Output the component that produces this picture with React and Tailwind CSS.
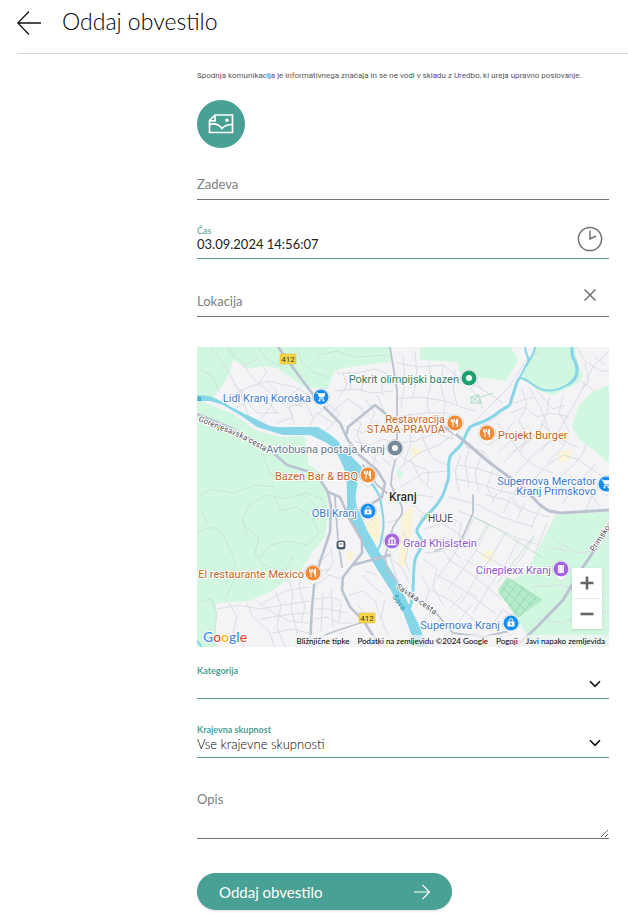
import { useState } from "react";

const GREENS = [
  "M0 0H193L195 15L166 18L143 22L136 26L131 42L116 41L104 38L93 30L80 21L66 19L50 22L36 12L33 24L26 38L18 48L14 54L0 50Z",
  "M0 53L35 66L60 84L85 90L108 89L111 116L121 125L130 145L131 163L128 190L116 204L103 224L76 243L53 254L19 256V300H0Z",
  "M223 0H314L321 13L313 27L308 34L276 29L263 26L260 15L223 13Z",
  "M338 0H378L380 13L386 29L380 37L356 48L340 43L326 31L328 18Z",
  "M412 38L393 46L381 60L375 80L382 92L396 103L412 116Z",
  "M359 168L412 165V300H336L326 281L303 246L306 236L320 231L331 221L346 193Z",
  "M200 120L207 128L201 132Z",
];

const YELLOWS = [
  "M168 168L182 166L184 188L178 200L168 184Z",
  "M205 168L216 158L214 190L208 220L201 218L204 190Z",
  "M215 98L224 104L218 112L214 106Z",
  "M360 106L372 102L376 110L364 116Z",
  "M288 204L297 203L294 216L284 210Z",
  "M150 204L158 206L154 216L149 212Z",
];

// thin streets
const STREETS = [
  // north-west quarter
  "M14 0L30 22L44 48L52 70",
  "M32 0L48 20L58 34L74 46L92 62L98 78",
  "M28 52L52 40L70 34L98 40L118 52",
  "M38 62L58 50L82 54L106 60",
  "M46 20L60 12L70 24L62 36",
  "M64 72L76 56L92 50L104 40",
  "M80 76L96 70L92 60L108 56L116 70",
  "M48 52L60 66L84 66",
  "M36 38L46 44L42 56",
  "M70 34L80 44L74 58L80 66",
  "M112 80L120 66L136 76",
  "M122 66L132 58L142 66L136 78L128 84",
  "M142 50L150 38L146 26M134 66L150 52L166 62",
  "M140 26L160 26L178 22L194 28",
  "M138 44L158 42L176 46L196 44",
  "M156 82L166 86L178 74L190 84L200 84",
  "M158 94L172 98L186 92L198 96",
  "M154 70L164 76L160 88L168 104L182 116",
  "M160 58L170 70M168 52L178 66L172 78M180 48L188 66",
  "M186 48L184 30M164 44L168 26M154 42L152 24",
  "M180 104L176 118M186 112L194 118",
  // centre
  "M200 16L222 20L246 18L266 34L282 40L306 56",
  "M200 52L222 50L248 54L264 60L278 64",
  "M202 70L226 66L250 66L262 72",
  "M206 8L208 34L204 60M218 4L220 30L216 50M232 14L234 36L230 54L232 66",
  "M246 18L244 40L248 54L246 78M258 22L256 40L260 58",
  "M270 36L282 52L286 62M278 30L284 42",
  "M200 96L218 94L238 86L256 92",
  "M204 82L224 84L246 82M212 66L214 96L206 118",
  "M224 66L226 92L236 112L250 118",
  "M202 122L222 106L242 98L258 86",
  "M204 140L226 126L250 124M214 112L222 130L236 144",
  "M202 108L218 118L232 124L230 140",
  "M206 152L222 148L236 150",
  "M214 156L226 166L222 178",
  "M190 176L202 172L206 162",
  // east
  "M273 80L296 56L312 40L330 12L344 4",
  "M283 80L296 72L316 56L336 50",
  "M314 66L328 60L340 70L354 66L372 70",
  "M324 40L330 58L322 74L330 88L324 104",
  "M332 40L344 62L352 84L366 98M340 44L356 62L368 58",
  "M352 50L350 66L342 84L330 96L316 104",
  "M366 48L362 66L372 84L366 100L350 116",
  "M380 0L388 14L404 24L412 24M412 4L396 20L378 56L362 84L344 104",
  "M384 34L398 44M388 16L392 34L384 44M398 10L408 18",
  "M300 76L314 92L326 110L340 120L356 126",
  "M292 98L306 88L318 74M300 106L316 92L332 78",
  "M306 116L322 100L340 86M318 128L334 110L350 96L372 88",
  "M332 138L350 118L366 108L380 112L412 134",
  "M350 146L366 128L384 110L390 96",
  "M366 156L380 136L398 118M388 164L396 146L412 128",
  "M344 76L358 90L380 100M372 128L392 146L404 160",
  "M268 100L286 104L300 122M264 108L258 124L262 146",
  "M274 96L268 116L272 140M286 104L278 126L282 146",
  "M262 118L282 122L306 130M258 132L280 136L304 144L330 150",
  "M296 122L290 140L296 152M308 130L304 146M320 138L316 152L324 164",
  // south-east grid
  "M252 150L282 158L304 170L336 180M262 164L290 176L318 190L342 198",
  "M288 148L306 152L332 164L352 170M294 158L300 146M306 166L314 150M320 172L328 156M334 180L344 160",
  "M248 168L264 176L262 190L280 204L304 218L322 226",
  "M228 182L244 176L258 184L268 194M232 196L248 190L262 202",
  "M276 172L268 190L254 212L240 232M292 178L280 202L266 222L250 244",
  "M308 186L296 208L280 230L264 256M322 192L308 218L292 240L276 266",
  "M338 188L324 212L308 230M350 176L338 206",
  "M250 212L270 224L290 240L304 252M240 228L262 240L284 256L300 268",
  "M232 242L254 254L272 268L286 284M226 212L240 222L236 240L246 258",
  "M224 228L232 242L228 258L240 268M228 206L246 204L256 216",
  "M256 204L264 212M268 212L276 218M284 224L294 230M270 244L280 250",
  "M252 262L266 248M262 274L274 258M292 284L306 262L318 274",
  "M232 282L244 272L256 288L250 300M276 286L292 292L300 300",
  "M336 240L364 238L392 250L412 244M340 272L366 276L396 262L412 266",
  "M356 192L380 206L396 204M352 200L370 204",
  // centre-south
  "M206 184L212 196L208 214L213 226M192 206L198 226L204 240",
  "M194 212L206 222L212 236",
  "M134 200L136 216L128 228",
  "M152 248L166 244L178 254L184 272M160 258L172 270L180 266",
  "M166 228L176 240L186 246M168 224L180 228M188 252L184 272L192 290L208 300",
  // south-west
  "M20 262L42 258L62 262L86 258L112 254",
  "M50 256L56 270L72 284L78 300M60 254L70 262L92 274L112 276",
  "M78 244L84 258L80 280L88 300M92 234L96 246L94 262L100 284L98 300",
  "M104 226L102 240L108 260L104 276M66 256L88 244L112 240",
  "M64 272L86 268L112 266M76 286L94 282L112 286",
  "M32 256L40 270L36 286L48 300M118 252L134 250L144 254",
  "M118 262L132 262L150 266M118 272L130 270L142 276L156 276",
  "M126 246L124 284M134 242L136 280M144 256L142 274",
  "M120 238L132 228L144 232M122 224L134 222M120 214L126 212L134 204",
];

// footpaths in the woods
const TRAILS = [
  "M0 150L14 142L36 146L58 138L78 140",
  "M0 186L14 180L24 184L30 196L38 214L36 236L28 252",
  "M50 188L46 172L52 158L70 148L88 152L108 146L126 152",
  "M46 178L62 190L58 206L66 218L88 224L96 210",
  "M62 212L74 198L92 194L110 198L122 186L116 172L118 158L104 146",
  "M76 148L84 164L100 160L112 168",
  "M30 0L38 12M0 20L16 30L22 44M60 0L72 14L86 20M100 0L104 14L118 26L132 30",
  "M0 256L14 252L20 266L16 300M66 106L72 126L90 134L112 134",
  "M4 164L10 176M120 8L140 4L158 10L190 8",
];

const MAJOR = [
  "M81 0L100 26L120 53L143 76L151 93L160 106L180 123L188 136L185 150L170 160",
  "M150 86L151 80L178 58L190 68L200 72",
  "M0 67L32 80L73 103L90 118L110 124L124 134L131 145L134 160L133 185L126 206L118 230L115 260L113 300",
  "M131 145L143 150L153 173L165 193L165 206L146 230L145 243L153 260L166 273L182 298",
  "M156 218L193 208",
];

const MEDIUM = [
  "M193 0L200 43L200 106L195 126L194 138L205 160L205 167L196 180L188 210L190 223L206 243L240 267L256 286L286 290L312 284",
  "M166 275L133 286L114 294",
  "M138 150L141 193L145 220",
  "M276 148L276 166L264 194L238 204",
  "M166 118L180 138L190 146",
];

const POI_COLORS = {
  shop: { pin: "#1a8df0", text: "#3c78d0" },
  food: { pin: "#f08a35", text: "#c8651c" },
  park: { pin: "#1fa071", text: "#29805a" },
  transit: { pin: "#78899a", text: "#66788a" },
  culture: { pin: "#a466e0", text: "#8e56cc" },
};

const POIS = [
  { kind: "shop", icon: "cart", x: 124, y: 50, lines: ["Lidl Kranj Koroška"], tx: 114, ty: 55 },
  { kind: "park", icon: "dot", x: 272, y: 31, lines: ["Pokrit olimpijski bazen"], tx: 262, ty: 36 },
  { kind: "food", icon: "fork", x: 258, y: 76, lines: ["Restavracija", "STARA PRAVDA"], tx: 248, ty: 76 },
  { kind: "food", icon: "fork", x: 290, y: 86, lines: ["Projekt Burger"], tx: 301, ty: 92, anchor: "start" },
  { kind: "transit", icon: "dot", x: 198, y: 101, lines: ["Avtobusna postaja Kranj"], tx: 188, ty: 106 },
  { kind: "food", icon: "fork", x: 171, y: 128, lines: ["Bazen Bar & BBQ"], tx: 161, ty: 133 },
  { kind: "shop", icon: "bag", x: 171, y: 164, lines: ["OBI Kranj"], tx: 160, ty: 170 },
  { kind: "shop", icon: "cart", x: 409, y: 137, lines: ["Supernova Mercator", "Kranj Primskovo"], tx: 399, ty: 138 },
  { kind: "culture", icon: "museum", x: 195, y: 194, lines: ["Grad Khislstein"], tx: 206, ty: 200, anchor: "start" },
  { kind: "food", icon: "fork", x: 116, y: 226, lines: ["El restaurante Mexico"], tx: 107, ty: 231 },
  { kind: "culture", icon: "film", x: 364, y: 222, lines: ["Cineplexx Kranj"], tx: 354, ty: 227 },
  { kind: "shop", icon: "bag", x: 314, y: 276, lines: ["Supernova Kranj"], tx: 303, ty: 282 },
];

const PinGlyph = ({ icon, color }) => {
  if (icon === "dot") return <circle r="3" fill="#fff" />;
  if (icon === "cart")
    return (
      <g fill="#fff">
        <path d="M-4.5 -4H-3L-1.5 0H2.5L4 -3.2H-2" stroke="#fff" strokeWidth="1" />
        <path d="M-2 1.8H3" stroke="#fff" strokeWidth="1" />
        <circle cx="-1.5" cy="3.4" r="1" />
        <circle cx="2.5" cy="3.4" r="1" />
      </g>
    );
  if (icon === "bag")
    return (
      <g>
        <path d="M-3.5 -1.5H3.5V3.5H-3.5Z" fill="#fff" />
        <path d="M-1.8 -1.5V-2.5A1.8 1.8 0 0 1 1.8 -2.5V-1.5" fill="none" stroke="#fff" />
        <circle cy="1" r="0.9" fill={color} />
      </g>
    );
  if (icon === "museum")
    return (
      <path d="M-4.4 -1.5L0 -4.4L4.4 -1.5ZM-3.6 -0.9H-2.2V2.4H-3.6ZM-0.7 -0.9H0.7V2.4H-0.7ZM2.2 -0.9H3.6V2.4H2.2ZM-4.4 2.8H4.4V4.2H-4.4Z" fill="#fff" />
    );
  if (icon === "film")
    return (
      <g>
        <path d="M-3 -4H3V4H-3Z" fill="#fff" />
        <path d="M-1.8 -3.5V3.5M1.8 -3.5V3.5" stroke={color} strokeWidth="0.7" strokeDasharray="1 1" />
      </g>
    );
  return (
    <g fill="none" stroke="#fff">
      <path d="M-3.5 -4V-1.2H-0.6V-4M-2 -4V4" strokeWidth="1" />
      <path d="M2.4 4V-3.6C1 -3 1 -1 1.2 0.4H2.4" strokeWidth="1.2" fill="#fff" />
    </g>
  );
};

const Poi = ({ poi }) => {
  const { pin, text } = POI_COLORS[poi.kind];
  return (
    <g>
      <g transform={`translate(${poi.x} ${poi.y})`}>
        <path d="M0 12C-2 9 -8.5 6.5 -8.5 0A8.5 8.5 0 0 1 8.5 0C8.5 6.5 2 9 0 12Z" fill="#fff" stroke="#b9bec6" strokeWidth="0.5" />
        <circle r="7.5" fill={pin} />
        <PinGlyph icon={poi.icon} color={pin} />
      </g>
      {poi.lines.map((line, i) => (
        <text
          key={line}
          x={poi.tx}
          y={poi.ty + i * 10}
          textAnchor={poi.anchor || "end"}
          fill={text}
          stroke="#fff"
          strokeWidth="2"
          paintOrder="stroke"
          className="font-[Roboto,sans-serif] text-[11px]"
        >
          {line}
        </text>
      ))}
    </g>
  );
};

const RoadShield = ({ x, y }) => (
  <g transform={`translate(${x} ${y})`}>
    <rect x="-8" y="-5" width="16" height="10" rx="1" fill="#f9d54a" stroke="#e2bd35" strokeWidth="0.6" />
    <text y="3" textAnchor="middle" fill="#3a3520" className="font-[Roboto,sans-serif] text-[8px]">
      412
    </text>
  </g>
);

const CityMap = () => (
  <svg viewBox="0 0 412 300" preserveAspectRatio="xMidYMid slice" className="block h-full w-full" role="img" aria-label="Kranj">
    <rect width="412" height="300" fill="#f4f4f6" />
    <g fill="#d1f7e0">
      {GREENS.map((d) => (
        <path key={d} d={d} />
      ))}
    </g>
    <path d="M310 230L346 253L320 271L301 243Z" fill="#b4ecc9" />
    <path d="M0 294L5 300" stroke="#86d6e8" strokeWidth="2" />
    <g fill="#fbf3d6">
      {YELLOWS.map((d) => (
        <path key={d} d={d} />
      ))}
    </g>
    <g fill="none" stroke="#c6e2d6" strokeWidth="0.9">
      {TRAILS.map((d) => (
        <path key={d} d={d} />
      ))}
    </g>
    <g fill="none" stroke="#dadde4" strokeWidth="1" strokeLinejoin="round">
      {STREETS.map((d) => (
        <path key={d} d={d} />
      ))}
    </g>
    <g fill="none" stroke="#8fd0ae" strokeWidth="0.7">
      <path d="M308 235L334 258M305 240L328 263M302 246L322 268M315 233L340 254M322 238L344 253" />
      <path d="M314 232L303 247M320 237L307 254M326 241L312 260M332 246L317 266M339 250L322 270" />
      <path d="M277 170L300 182L326 198L344 210M290 178L280 196M336 190L316 216L300 236" strokeOpacity="0.7" />
      <path d="M274 50L282 48L284 56L274 56ZM274 50L284 56M282 48L274 56M284 50L296 46" />
    </g>
    <g fill="none" stroke="#86d6e8" strokeLinecap="round" strokeLinejoin="round">
      <path d="M321 33C318 40 317 46 315 50C314 56 313 59 310 60C304 62 299 68 293 71C286 76 280 76 273 80C268 86 268 92 265 96C262 102 254 106 253 110C250 118 253 126 251 133C248 142 247 148 243 153C238 162 230 167 226 173C222 178 219 182 220 185C222 190 226 192 225 196C224 204 219 208 218 213C216 222 217 232 216 240C217 248 215 254 213 260" strokeWidth="3" />
      <path d="M338 0C337 10 331 14 328 20C326 26 323 30 321 33M328 0C328 8 334 10 330 18M323 31C332 32 336 40 344 42C354 46 364 42 372 37" strokeWidth="2" />
      <path d="M372 37C380 32 382 24 378 14C374 10 375 4 375 0" strokeWidth="3.2" />
      <path d="M164 132C172 130 178 140 183 150C184 160 188 170 186 184C184 194 184 200 178 206" strokeWidth="2.2" />
    </g>
    <path
      d="M0 48L12 49Q24 53 36 61L50 68L73 79Q84 81 93 80L121 80Q132 86 140 93L153 108L165 120Q163 128 161 133L159 146Q158 154 160 160L170 183L183 206L200 233L213 260L223 280L229 300H219L206 265L193 242L180 222L166 198L155 178L150 162L150 143L149 126L140 106Q136 100 130 96L113 88H86L60 80L43 68L26 58L13 54H0Z"
      fill="#86d6e8"
    />
    <g fill="none" stroke="#bcc3d0" strokeLinecap="round" strokeLinejoin="round">
      <g strokeWidth="2.6">
        {MAJOR.map((d) => (
          <path key={d} d={d} />
        ))}
      </g>
      <g strokeWidth="1.8">
        {MEDIUM.map((d) => (
          <path key={d} d={d} />
        ))}
      </g>
      <path d="M245 79L260 88L293 116L326 140L343 158L352 164L364 166L412 163M412 182L386 220L366 253L340 280L318 300" strokeWidth="3" />
    </g>
    <g className="font-[Roboto,sans-serif] text-[8px]" fill="#44484e" stroke="#fff" strokeWidth="2" paintOrder="stroke">
      <path id="gorenjesavska" d="M1 74L34 87Q52 94 90 118" fill="none" stroke="none" />
      <text>
        <textPath href="#gorenjesavska">Gorenjesavska cesta</textPath>
      </text>
      <path id="savska" d="M199 241Q216 252 256 281" fill="none" stroke="none" />
      <text>
        <textPath href="#savska">Savska cesta</textPath>
      </text>
      <path id="primskovo" d="M397 205L430 155" fill="none" stroke="none" />
      <text>
        <textPath href="#primskovo">Primskovo</textPath>
      </text>
      <path id="sava" d="M195 250L218 282" fill="none" stroke="none" />
      <text fill="#2193a8" stroke="none">
        <textPath href="#sava">Sava</textPath>
      </text>
      <text x="0" y="54" fill="#2193a8" stroke="none">
        a
      </text>
      <text x="231" y="175" className="text-[10px]">
        HUJE
      </text>
    </g>
    <RoadShield x={91} y={12} />
    <RoadShield x={170} y={271} />
    <g transform="translate(144 198)">
      <rect x="-5" y="-5" width="10" height="10" rx="3" fill="#4d5a68" stroke="#fff" />
      <rect x="-2.5" y="-3" width="5" height="5" rx="1" fill="#fff" />
      <path d="M-1.5 -1H1.5M-2 3.5L-1 2.5M2 3.5L1 2.5" stroke="#4d5a68" strokeWidth="0.9" />
    </g>
    {POIS.map((poi) => (
      <Poi key={poi.lines[0]} poi={poi} />
    ))}
    <text x="192" y="154" fill="#2b2e33" stroke="#fff" strokeWidth="2" paintOrder="stroke" className="font-[Roboto,sans-serif] text-[12px] font-medium">
      Kranj
    </text>
    <text x="6" y="295" stroke="#fff" strokeWidth="2" paintOrder="stroke" className="font-[Lato,sans-serif] text-[14px] font-medium">
      <tspan fill="#4285f4">G</tspan>
      <tspan fill="#ea4335">o</tspan>
      <tspan fill="#f4b400">o</tspan>
      <tspan fill="#4285f4">g</tspan>
      <tspan fill="#34a853">l</tspan>
      <tspan fill="#ea4335">e</tspan>
    </text>
  </svg>
);

const ArrowLeft = () => (
  <svg viewBox="0 0 24 24" className="size-6" fill="none" stroke="#111" strokeWidth="1.3">
    <path d="M12 0.5L0.8 12L12 23.5M0.8 12H24" />
  </svg>
);

const ArrowRight = () => (
  <svg viewBox="0 0 16 16" className="size-4" fill="none" stroke="#fff" strokeWidth="1.2">
    <path d="M8.5 0.8L15.4 8L8.5 15.2M0 8H15.4" />
  </svg>
);

const PhotoIcon = () => (
  <svg viewBox="0 0 26 20" className="h-5 w-[26px]" fill="none" stroke="#fff" strokeWidth="1.7">
    <path d="M1.5 6.5L7 1H24.5V18.5H1.5ZM1.5 6.8H7V1" />
    <path d="M1.5 10.5C5 9.5 9 10 11.5 12L14 14.5C16 12 20 10.5 24.5 10.5" />
    <circle cx="19" cy="6.3" r="1.8" fill="#fff" stroke="none" />
  </svg>
);

const ClockIcon = () => (
  <svg viewBox="0 0 26 26" className="size-[26px]" fill="none" stroke="#6f7271" strokeWidth="1.5">
    <circle cx="13" cy="13" r="11.6" />
    <path d="M13 4.5V13L19 10" />
  </svg>
);

const CloseIcon = () => (
  <svg viewBox="0 0 12 12" className="size-3" fill="none" stroke="#6f7271" strokeWidth="1.5">
    <path d="M0.5 0.5L11.5 11.5M11.5 0.5L0.5 11.5" />
  </svg>
);

const Chevron = () => (
  <svg viewBox="0 0 12 8" className="pointer-events-none absolute right-2 bottom-[10px] h-2 w-3" fill="none" stroke="#111" strokeWidth="1.6">
    <path d="M1 1.2L6 6.4L11 1.2" />
  </svg>
);

const SelectField = ({ id, label, options }) => (
  <div className="relative flex h-9 flex-col border-b border-[#5f9d8f] pt-[3px]">
    <label htmlFor={id} className="text-[9px] leading-[10px] font-bold text-[#4aa193]">
      {label}
    </label>
    <select id={id} className="w-full appearance-none bg-transparent text-[13px] leading-[18px] font-light text-black outline-none">
      {options.map((option) => (
        <option key={option}>{option}</option>
      ))}
    </select>
    <Chevron />
  </div>
);

const App = () => {
  const [subject, setSubject] = useState("");
  const [time, setTime] = useState("03.09.2024 14:56:07");
  const [location, setLocation] = useState("");
  const [description, setDescription] = useState("");

  return (
    <main className="min-h-screen bg-white pb-[3px] font-[Lato,sans-serif] text-[13px] leading-4 text-[#222]">
      <header className="ml-[17px] flex h-[54px] items-start gap-[21px] border-b border-[#d5d9d8] pt-[11px]">
        <button type="button" aria-label="Nazaj">
          <ArrowLeft />
        </button>
        <h1 className="text-[23px] leading-5 font-light text-black">Oddaj obvestilo</h1>
      </header>

      <form className="mr-[19px] ml-[197px] flex flex-col" onSubmit={(e) => e.preventDefault()}>
        <p className="mt-4 font-[Roboto,sans-serif] text-[8px] leading-3 whitespace-nowrap text-[#555]">
          Spodnja komunikacija je informativnega značaja in se ne vodi v skladu z Uredbo, ki ureja upravno poslovanje.
        </p>
        <button type="button" aria-label="Dodaj sliko" className="mt-[18px] flex size-12 items-center justify-center rounded-full bg-[#49a094]">
          <PhotoIcon />
        </button>

        <div className="mt-4 flex h-9 items-center gap-2 border-b border-[#6f7271] pt-1">
          <label htmlFor="zadeva" className="text-[#7b7f7e]">
            Zadeva
          </label>
          <input id="zadeva" value={subject} onChange={(e) => setSubject(e.target.value)} className="min-w-0 flex-1 outline-none" />
        </div>

        <div className="mt-[23px] flex h-9 items-start border-b border-[#5f9d8f] pr-[6px]">
          <div className="flex min-w-0 flex-1 flex-col pt-[3px]">
            <label htmlFor="cas" className="text-[9px] leading-[10px] text-[#4aa193]">
              Čas
            </label>
            <input id="cas" value={time} onChange={(e) => setTime(e.target.value)} className="leading-4 outline-none" />
          </div>
          <button type="button" aria-label="Izberi čas" className="mt-[3px]">
            <ClockIcon />
          </button>
        </div>

        <div className="mt-[22px] flex h-9 items-center gap-2 border-b border-[#6f7271] pt-1 pr-[13px]">
          <label htmlFor="lokacija" className="text-[#7b7f7e]">
            Lokacija
          </label>
          <input id="lokacija" value={location} onChange={(e) => setLocation(e.target.value)} className="min-w-0 flex-1 outline-none" />
          <button type="button" aria-label="Počisti lokacijo" onClick={() => setLocation("")} className="mb-3">
            <CloseIcon />
          </button>
        </div>

        <div className="relative mt-[30px] h-[300px] overflow-hidden">
          <CityMap />
          <div className="absolute right-[7px] bottom-[18px] flex w-[30px] flex-col items-center bg-white shadow">
            <button type="button" aria-label="Povečaj" className="flex h-[30px] w-full items-center justify-center">
              <svg viewBox="0 0 14 14" className="size-[14px]" stroke="#666" strokeWidth="2.6">
                <path d="M7 0.5V13.5M0.5 7H13.5" />
              </svg>
            </button>
            <span className="h-px w-6 bg-[#e6e6e6]" />
            <button type="button" aria-label="Pomanjšaj" className="flex h-[30px] w-full items-center justify-center">
              <svg viewBox="0 0 14 14" className="size-[14px]" stroke="#666" strokeWidth="2.6">
                <path d="M0.5 7H13.5" />
              </svg>
            </button>
          </div>
          <div className="absolute right-0 bottom-0 flex gap-2 bg-[#f5f5f5]/70 px-1 text-[8px] leading-3 whitespace-nowrap text-black">
            <button type="button">Bližnjične tipke</button>
            <span>Podatki na zemljevidu ©2024 Google</span>
            <a href="#pogoji">Pogoji</a>
            <a href="#napaka">Javi napako zemljevida</a>
          </div>
        </div>

        <div className="mt-4 flex flex-col gap-[23px]">
          <SelectField id="kategorija" label="Kategorija" options={[""]} />
          <SelectField id="skupnost" label="Krajevna skupnost" options={["Vse krajevne skupnosti"]} />
        </div>

        <div className="mt-[33px] flex h-12 items-start gap-2 border-b border-[#6f7271]">
          <label htmlFor="opis" className="text-[#7b7f7e]">
            Opis
          </label>
          <textarea
            id="opis"
            value={description}
            onChange={(e) => setDescription(e.target.value)}
            className="h-full min-w-0 flex-1 resize-y outline-none"
          />
        </div>

        <button type="submit" className="mt-[34px] flex h-[37px] w-[255px] items-center justify-between rounded-full bg-[#49a094] px-[22px] text-[15px] text-white shadow">
          Oddaj obvestilo
          <ArrowRight />
        </button>
      </form>
    </main>
  );
};

export default App;
